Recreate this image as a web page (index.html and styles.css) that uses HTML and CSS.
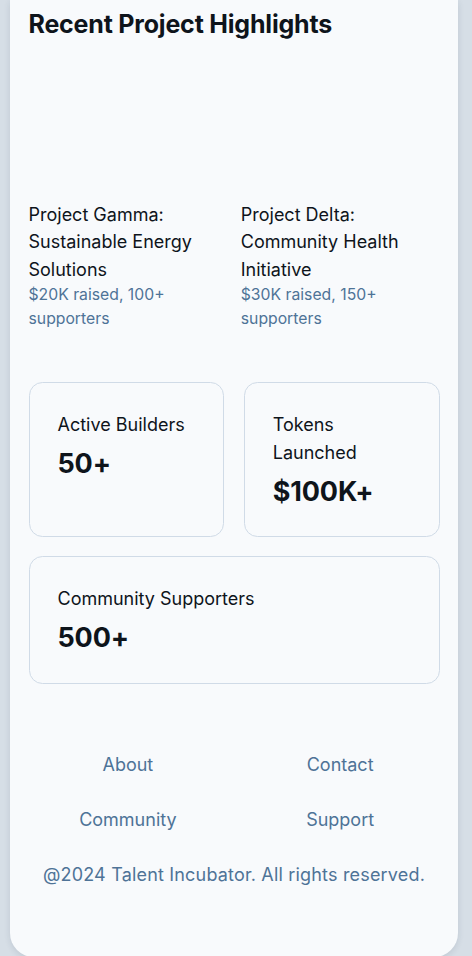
FILE: index.html
```html
<!DOCTYPE html>
<html lang="en">
<head>
<meta charset="utf-8">
<title>Recent Project Highlights</title>
<link rel="stylesheet" href="styles.css">
</head>
<body>
<main class="page">
  <h2 class="title">Recent Project Highlights</h2>
  <section class="projects">
    <article class="project">
      <div class="thumb"></div>
      <div>
        <p class="project-name">Project Gamma: Sustainable Energy Solutions</p>
        <p class="project-meta">$20K raised, 100+ supporters</p>
      </div>
    </article>
    <article class="project">
      <div class="thumb"></div>
      <div>
        <p class="project-name">Project Delta: Community Health Initiative</p>
        <p class="project-meta">$30K raised, 150+ supporters</p>
      </div>
    </article>
  </section>
  <section class="stats">
    <div class="stat">
      <p class="stat-label">Active Builders</p>
      <p class="stat-value">50+</p>
    </div>
    <div class="stat">
      <p class="stat-label">Tokens Launched</p>
      <p class="stat-value">$100K+</p>
    </div>
    <div class="stat stat-wide">
      <p class="stat-label">Community Supporters</p>
      <p class="stat-value">500+</p>
    </div>
  </section>
  <footer class="footer">
    <nav class="links">
      <a class="link" href="#">About</a>
      <a class="link" href="#">Contact</a>
      <a class="link" href="#">Community</a>
      <a class="link" href="#">Support</a>
    </nav>
    <p class="copy">@2024 Talent Incubator. All rights reserved.</p>
  </footer>
</main>
</body>
</html>
```
FILE: styles.css
```css
* { box-sizing: border-box; }
html, body { margin: 0; padding: 0; }
body {
  background: #d6dee6;
  font-family: Inter, "Noto Sans", sans-serif;
  color: #0e141b;
  height: 956px;
  overflow: hidden;
}
p { margin: 0; }
.page {
  margin: 0 14px 0 10px;
  background: #f8fafc;
  border-radius: 0 0 24px 24px;
  box-shadow: 0 2px 6px rgba(30, 50, 70, 0.12);
  padding: 0 18.5px 69px;
}
.title {
  margin: 0;
  padding-top: 8.8px;
  font-size: 25px;
  line-height: 31px;
  font-weight: 700;
  letter-spacing: -0.008em;
}
.projects {
  display: grid;
  grid-template-columns: 1fr 1fr;
  gap: 13.5px;
  padding-top: 34.6px;
}
.project {
  display: flex;
  flex-direction: column;
  gap: 13.5px;
}
.thumb {
  height: 113px;
  border-radius: 13.5px;
}
.project-name {
  font-size: 18px;
  line-height: 27.5px;
  font-weight: 400;
}
.project-meta {
  font-size: 15.75px;
  line-height: 23.6px;
  color: #4e7397;
}
.stats {
  display: grid;
  grid-template-columns: 1fr 1fr;
  gap: 19px 19.5px;
  margin-top: 51.5px;
}
.stat {
  border: 1px solid #d0dbe7;
  border-radius: 13.5px;
  padding: 28px;
  display: flex;
  flex-direction: column;
  gap: 8.5px;
}
.stat-wide { grid-column: 1 / -1; }
.stat-label {
  font-size: 18px;
  line-height: 27.5px;
  font-weight: 400;
}
.stat-value {
  font-size: 27px;
  line-height: 33.75px;
  font-weight: 700;
  letter-spacing: -0.005em;
}
.footer {
  margin-top: 66.7px;
  display: flex;
  flex-direction: column;
  gap: 28px;
  text-align: center;
}
.links {
  display: grid;
  grid-template-columns: 1fr 1fr;
  gap: 28px 13.5px;
}
.link, .copy {
  color: #4e7397;
  text-decoration: none;
  font-size: 18px;
  line-height: 27px;
}
.copy { letter-spacing: 0.01em; }
```
